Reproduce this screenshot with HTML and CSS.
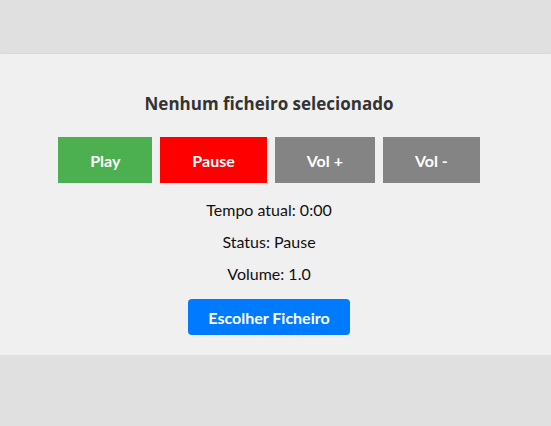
FILE: index.html
```html
<!DOCTYPE html>
<html lang="pt">
<head>
<meta charset="utf-8">
<title>Player</title>
<link rel="stylesheet" href="styles.css">
</head>
<body>
<main class="player">
  <h2 class="title">Nenhum ficheiro selecionado</h2>
  <div class="controls">
    <button class="btn btn-play">Play</button>
    <button class="btn btn-pause">Pause</button>
    <button class="btn btn-vol">Vol +</button>
    <button class="btn btn-vol">Vol -</button>
  </div>
  <p class="info">Tempo atual: 0:00</p>
  <p class="info">Status: Pause</p>
  <p class="info">Volume: 1.0</p>
  <button class="file-btn">Escolher Ficheiro</button>
</main>
</body>
</html>
```
FILE: styles.css
```css
html, body {
  margin: 0;
  padding: 0;
  background: #e0e0e0;
  font-family: "Lato", "Open Sans", sans-serif;
}
body {
  padding-top: 54px;
}
.player {
  background: #f0f0f0;
  box-shadow: 0 1px 4px rgba(0,0,0,0.12);
  height: 301px;
  box-sizing: border-box;
  padding-top: 39px;
  padding-right: 13px;
  display: flex;
  flex-direction: column;
  align-items: center;
}
.title {
  margin: 0;
  font-family: "Open Sans", sans-serif;
  font-weight: 700;
  font-size: 17px;
  line-height: 22px;
  color: #333;
}
.controls {
  display: flex;
  gap: 8px;
  margin-top: 22px;
}
.btn {
  border: none;
  height: 46px;
  padding: 0 32px;
  font-family: "Lato", sans-serif;
  font-size: 16px;
  font-weight: 700;
  color: #fff;
  cursor: pointer;
}
.btn-play { background: #4caf50; }
.btn-pause { background: #ff0000; }
.btn-vol { background: #848484; }
.info {
  margin: 0;
  font-size: 16px;
  line-height: 20px;
  color: #111;
}
.controls + .info { margin-top: 17px; }
.info + .info { margin-top: 12px; }
.file-btn {
  margin-top: 15px;
  width: 162px;
  height: 36px;
  border: none;
  border-radius: 4px;
  background: #007bff;
  color: #fff;
  font-family: "Lato", sans-serif;
  font-size: 16px;
  font-weight: 700;
  cursor: pointer;
}
```
